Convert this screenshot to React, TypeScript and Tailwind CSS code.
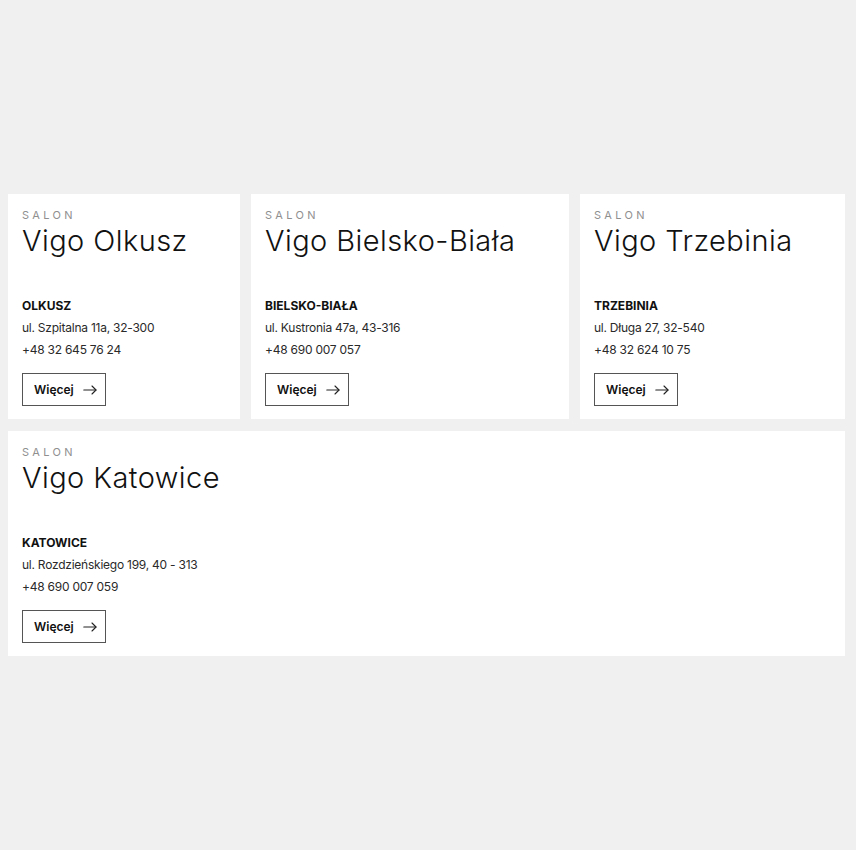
import React from "react";

type Salon = {
  name: string;
  city: string;
  address: string;
  phone: string;
  width: string;
};

const salons: Salon[] = [
  { name: "Vigo Olkusz", city: "OLKUSZ", address: "ul. Szpitalna 11a, 32-300", phone: "+48 32 645 76 24", width: "w-[232px]" },
  { name: "Vigo Bielsko-Biała", city: "BIELSKO-BIAŁA", address: "ul. Kustronia 47a, 43-316", phone: "+48 690 007 057", width: "w-[318px]" },
  { name: "Vigo Trzebinia", city: "TRZEBINIA", address: "ul. Długa 27, 32-540", phone: "+48 32 624 10 75", width: "flex-1" },
  { name: "Vigo Katowice", city: "KATOWICE", address: "ul. Rozdzieńskiego 199, 40 - 313", phone: "+48 690 007 059", width: "w-full" },
];

function Arrow() {
  return (
    <svg width="14" height="10" viewBox="0 0 14 10" fill="none" stroke="#222" strokeWidth="1.1" strokeLinecap="round" strokeLinejoin="round">
      <path d="M0.8 5h12.2" />
      <path d="M9 1l4 4-4 4" />
    </svg>
  );
}

function Card({ s }: { s: Salon }) {
  return (
    <div className={`${s.width} bg-white px-[14px] pt-[14px] pb-[13px]`}>
      <div className="text-[11px] leading-[14px] tracking-[0.3em] text-[#8f8f8f]">SALON</div>
      <div className="mt-[2px] text-[29px] leading-[34px] font-light text-[#111] tracking-[0.015em]">{s.name}</div>
      <div className="mt-[40px] text-[12px] leading-[16px] font-bold text-[#111]">{s.city}</div>
      <div className="mt-[3px] text-[12px] leading-[22px] tracking-[-0.02em] text-[#2a2a2a]">{s.address}</div>
      <div className="text-[12px] leading-[22px] tracking-[-0.02em] text-[#2a2a2a]">{s.phone}</div>
      <button className="mt-[12px] flex h-[33px] w-[84px] items-center gap-[9px] border border-[#555] pl-[11px] text-[12px] font-semibold text-[#111]">
        <span>Więcej</span>
        <Arrow />
      </button>
    </div>
  );
}

export default function App() {
  return (
    <div className="min-h-[850px] w-full bg-[#f0f0f0] pl-[8px] pr-[11px] pt-[194px]" style={{ fontFamily: "Inter, 'Noto Sans', sans-serif" }}>
      <div className="flex flex-wrap gap-x-[11px] gap-y-[12px]">
        {salons.map((s) => (
          <Card key={s.name} s={s} />
        ))}
      </div>
    </div>
  );
}
